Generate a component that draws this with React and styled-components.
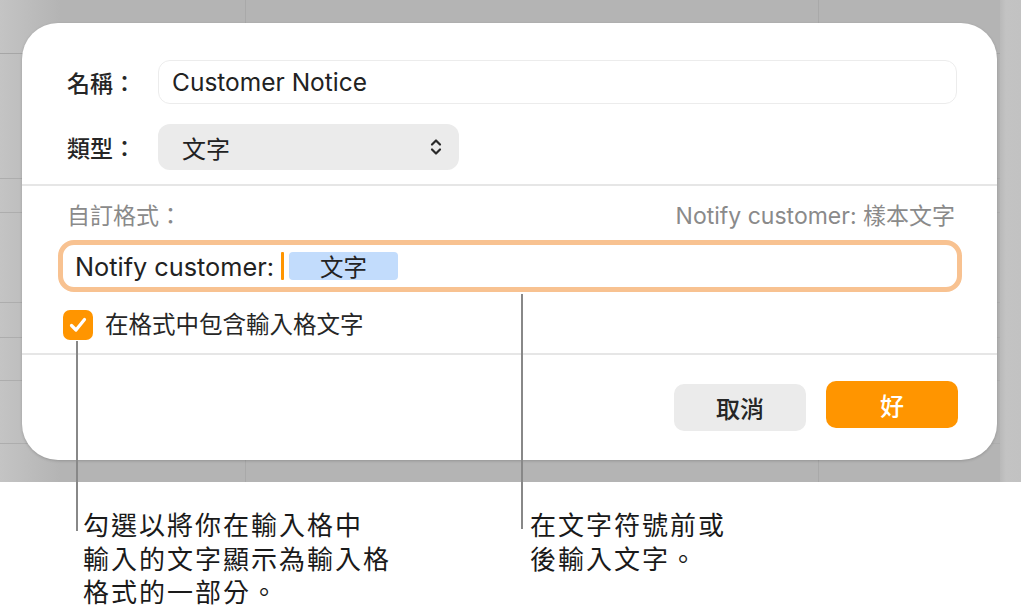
import React from "react";
import styled, { createGlobalStyle } from "styled-components";

const GlobalStyle = createGlobalStyle`
  html, body {
    margin: 0;
    padding: 0;
    background: #fff;
  }
  body {
    font-family: Inter, "Noto Sans CJK TC", sans-serif;
    color: #222;
  }
`;

const Page = styled.div`
  position: relative;
  width: 1021px;
  height: 614px;
  overflow: hidden;
  background: #fff;
`;

// greyed-out spreadsheet window behind the sheet
const Backdrop = styled.div`
  height: 482px;
  display: flex;
`;

const Window = styled.div`
  width: 1000px;
  box-sizing: border-box;
  padding: 23px 3px 0 22px;
  background-color: #b4b4b4;
  background-image:
    linear-gradient(to bottom, transparent 53px, #a6a6a6 53px, #a6a6a6 54px, transparent 54px),
    linear-gradient(to bottom, transparent 178px, #adadad 178px, #adadad 179px, transparent 179px),
    linear-gradient(to bottom, transparent 212px, #adadad 212px, #adadad 213px, transparent 213px),
    linear-gradient(to bottom, transparent 302px, #adadad 302px, #adadad 303px, transparent 303px),
    linear-gradient(to bottom, transparent 337px, #adadad 337px, #adadad 338px, transparent 338px),
    linear-gradient(to bottom, transparent 380px, #adadad 380px, #adadad 381px, transparent 381px),
    linear-gradient(to bottom, transparent 443px, #adadad 443px, #adadad 444px, transparent 444px),
    linear-gradient(to right, transparent 245px, #a9a9a9 245px, #a9a9a9 246px, transparent 246px),
    linear-gradient(to right, transparent 818px, #a9a9a9 818px, #a9a9a9 819px, transparent 819px),
    linear-gradient(to right, #c4c4c4 0, #b4b4b4 60px);
`;

const Strip = styled.div`
  flex: 1;
  background: linear-gradient(to right, #b9b9b9, #c3c3c3 6px, #c2c2c2);
`;

const Dialog = styled.div`
  width: 975px;
  height: 437px;
  background: #fff;
  border-radius: 36px;
  box-shadow: 0 1px 3px rgba(0, 0, 0, 0.18);
  display: flex;
  flex-direction: column;
  overflow: hidden;
`;

const TopSection = styled.div`
  padding: 37px 40px 14px 45px;
  display: flex;
  flex-direction: column;
  gap: 20px;
`;

const Divider = styled.div`
  height: 2px;
  background: #e6e6e6;
  flex-shrink: 0;
`;

const FieldRow = styled.div`
  display: flex;
  align-items: center;
`;

const Label = styled.div`
  width: 91px;
  flex-shrink: 0;
  font-size: 23px;
  font-weight: 500;
  color: #262626;
`;

const TextInput = styled.div`
  flex: 1;
  height: 44px;
  box-sizing: border-box;
  border: 1.5px solid #ececec;
  border-radius: 12px;
  padding: 0 13px;
  display: flex;
  align-items: center;
  font-size: 24.5px;
  color: #222;
`;

const Select = styled.div`
  width: 301px;
  height: 46px;
  box-sizing: border-box;
  background: #ebebeb;
  border-radius: 12px;
  padding: 0 16px 0 24px;
  display: flex;
  align-items: center;
  justify-content: space-between;
  font-size: 24px;
  color: #222;
`;

const MiddleSection = styled.div`
  padding: 14px 35px 13px 36px;
  display: flex;
  flex-direction: column;
`;

const CaptionRow = styled.div`
  display: flex;
  justify-content: space-between;
  align-items: center;
  padding: 0 7px 0 9px;
  height: 28px;
  font-size: 23px;
  color: #8a8a8a;
`;

const FormatField = styled.div`
  margin-top: 12px;
  height: 52px;
  box-sizing: border-box;
  border: 5px solid #f8c291;
  border-radius: 16px;
  padding: 0 12px;
  display: flex;
  align-items: center;
  font-size: 25.3px;
  color: #222;
`;

const Caret = styled.span`
  width: 3px;
  height: 28px;
  background: #ff9500;
  border-radius: 1px;
  margin: 0 5px 0 7px;
`;

const Token = styled.span`
  width: 109px;
  height: 28px;
  background: #c2dcfc;
  border-radius: 4px;
  display: flex;
  align-items: center;
  justify-content: center;
  font-size: 23.5px;
`;

const CheckRow = styled.label`
  margin-top: 18px;
  padding-left: 5px;
  height: 30px;
  line-height: 30px;
  display: flex;
  align-items: center;
  gap: 12px;
  font-size: 23.5px;
  color: #262626;
`;

const CheckBox = styled.span`
  width: 30px;
  height: 30px;
  border-radius: 7px;
  background: #ff9500;
  display: flex;
  align-items: center;
  justify-content: center;
`;

const ButtonBar = styled.div`
  flex: 1;
  padding: 26px 39px 0 0;
  display: flex;
  justify-content: flex-end;
  align-items: flex-start;
  gap: 20px;
`;

const Button = styled.button`
  width: 132px;
  height: 47px;
  margin-top: ${(p) => (p.$primary ? "0" : "3px")};
  border: none;
  border-radius: 10px;
  background: ${(p) => (p.$primary ? "#ff9500" : "#ebebeb")};
  color: ${(p) => (p.$primary ? "#fff" : "#262626")};
  font-family: Inter, "Noto Sans CJK TC", sans-serif;
  font-size: 24px;
  font-weight: 500;
`;

// annotations under the screenshot
const Callouts = styled.div`
  display: flex;
  padding: 27px 0 0 83px;
`;

const CalloutText = styled.div`
  width: ${(p) => p.$width}px;
  font-size: 26px;
  letter-spacing: 2px;
  line-height: 33.5px;
  color: #1a1a1a;
`;

const Leader = styled.div`
  position: absolute;
  left: ${(p) => p.$x}px;
  top: ${(p) => p.$top}px;
  height: ${(p) => p.$bottom - p.$top}px;
  width: 2px;
  background: #888;
`;

const Chevrons = () => (
  <svg width="14" height="22" viewBox="0 0 14 22" fill="none">
    <path d="M3 8.5 L7 4.5 L11 8.5" stroke="#2a2a2a" strokeWidth="2.2" strokeLinecap="round" strokeLinejoin="round" />
    <path d="M3 13.5 L7 17.5 L11 13.5" stroke="#2a2a2a" strokeWidth="2.2" strokeLinecap="round" strokeLinejoin="round" />
  </svg>
);

const Check = () => (
  <svg width="22" height="22" viewBox="0 0 22 22" fill="none">
    <path d="M4.5 11.5 L9 16 L17.5 5.5" stroke="#fff" strokeWidth="3.2" strokeLinecap="round" strokeLinejoin="round" />
  </svg>
);

export default function App() {
  return (
    <Page>
      <GlobalStyle />
      <Backdrop>
        <Window>
          <Dialog>
            <TopSection>
              <FieldRow>
                <Label>名稱：</Label>
                <TextInput>Customer Notice</TextInput>
              </FieldRow>
              <FieldRow>
                <Label>類型：</Label>
                <Select>
                  <span>文字</span>
                  <Chevrons />
                </Select>
              </FieldRow>
            </TopSection>
            <Divider />
            <MiddleSection>
              <CaptionRow>
                <span>自訂格式：</span>
                <span>Notify customer: 樣本文字</span>
              </CaptionRow>
              <FormatField>
                <span>Notify customer:</span>
                <Caret />
                <Token>文字</Token>
              </FormatField>
              <CheckRow>
                <CheckBox>
                  <Check />
                </CheckBox>
                在格式中包含輸入格文字
              </CheckRow>
            </MiddleSection>
            <Divider />
            <ButtonBar>
              <Button>取消</Button>
              <Button $primary>好</Button>
            </ButtonBar>
          </Dialog>
        </Window>
        <Strip />
      </Backdrop>
      <Callouts>
        <CalloutText $width={447}>
          勾選以將你在輸入格中
          <br />
          輸入的文字顯示為輸入格
          <br />
          格式的一部分。
        </CalloutText>
        <CalloutText $width={300}>
          在文字符號前或
          <br />
          後輸入文字。
        </CalloutText>
      </Callouts>
      <Leader $x={76} $top={341} $bottom={531} />
      <Leader $x={521} $top={294} $bottom={529} />
    </Page>
  );
}
